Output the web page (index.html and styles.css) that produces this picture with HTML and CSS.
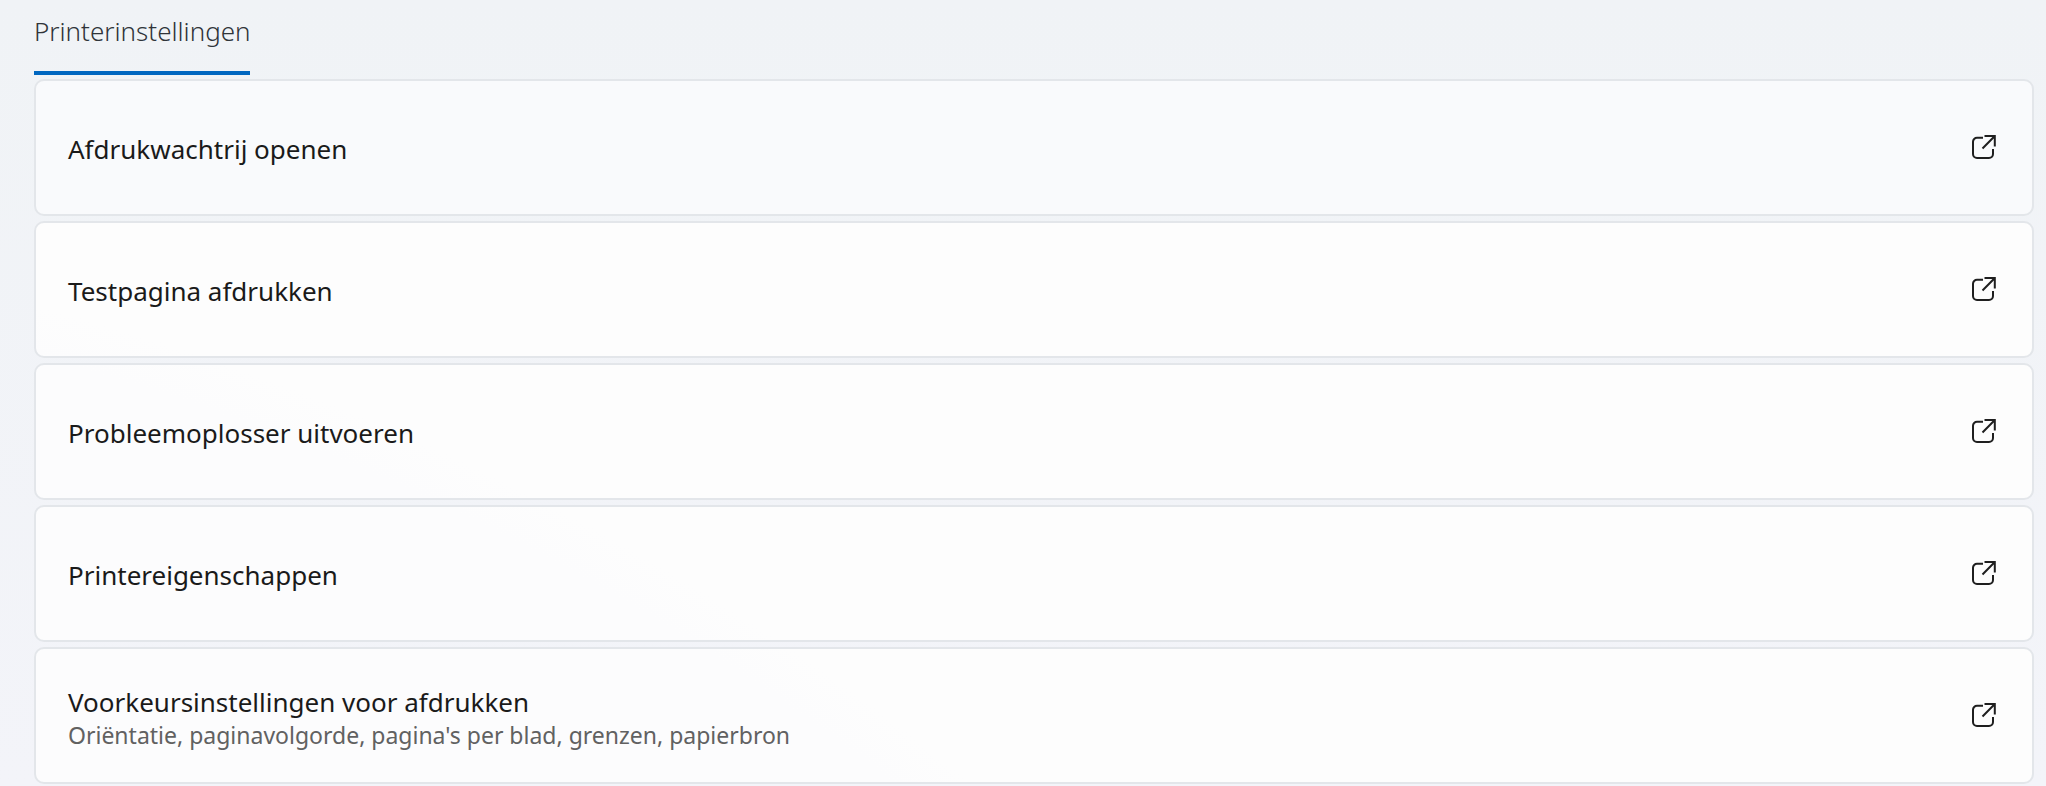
FILE: index.html
```html
<!DOCTYPE html>
<html lang="en">

<head>
    <meta charset="UTF-8">
    <meta name="viewport" content="width=device-width, initial-scale=1.0">
    <title>Printerinstellingen</title>
    <link rel="stylesheet" href="styles.css">
</head>

<body>
    <svg class="icon-defs" width="0" height="0">
        <symbol id="icon-open" viewBox="0 0 25 25">
            <path d="M11 2.800H5A4 4 0 0 0 1 6.800V19A4 4 0 0 0 5 23H17A4 4 0 0 0 21 19V14" />
            <path d="M12.500 1H22.800V11.500M22.800 1L10.500 13.500" />
        </symbol>
    </svg>

    <div class="tabs">
        <div class="tab">Printerinstellingen</div>
    </div>

    <div class="list">
        <div class="card first">
            <div class="card-text">
                <div class="card-title">Afdrukwachtrij openen</div>
            </div>
            <svg class="icon"><use href="#icon-open"></use></svg>
        </div>
        <div class="card">
            <div class="card-text">
                <div class="card-title">Testpagina afdrukken</div>
            </div>
            <svg class="icon"><use href="#icon-open"></use></svg>
        </div>
        <div class="card">
            <div class="card-text">
                <div class="card-title">Probleemoplosser uitvoeren</div>
            </div>
            <svg class="icon"><use href="#icon-open"></use></svg>
        </div>
        <div class="card">
            <div class="card-text">
                <div class="card-title">Printereigenschappen</div>
            </div>
            <svg class="icon"><use href="#icon-open"></use></svg>
        </div>
        <div class="card">
            <div class="card-text">
                <div class="card-title">Voorkeursinstellingen voor afdrukken</div>
                <div class="card-sub">Oriëntatie, paginavolgorde, pagina's per blad, grenzen, papierbron</div>
            </div>
            <svg class="icon"><use href="#icon-open"></use></svg>
        </div>
    </div>
</body>

</html>
```

FILE: styles.css
```css
html,
body {
    height: 100%;
}

body {
    margin: 0;
    padding: 0 12px 0 34px;
    overflow: hidden;
    font-family: "Noto Sans", "Open Sans", sans-serif;
    color: #1a1a1a;
    background: linear-gradient(#f0f3f6, #f3f4f9);
    box-sizing: border-box;
}

.icon-defs {
    display: block;
    height: 0;
}

.tabs {
    display: flex;
    height: 75px;
}

.tab {
    width: 216px;
    height: 71px;
    border-bottom: 4px solid #0067c0;
    font-size: 26px;
    font-weight: 300;
    line-height: 62px;
    color: #2f3439;
    white-space: nowrap;
}

.list {
    display: flex;
    flex-direction: column;
    gap: 5px;
    margin-top: 4px;
}

.card {
    display: flex;
    align-items: center;
    justify-content: space-between;
    height: 137px;
    padding: 0 35px 0 32px;
    box-sizing: border-box;
    background: radial-gradient(circle 2453px at -585px 2679px, #fcfcfd 98%, #fdfdfd 100%) fixed;
    border: 2px solid #e3e6ea;
    border-radius: 10px;
}

.card.first {
    background: #f9fafc;
}

.card-text {
    padding-top: 3px;
}

.card-title {
    font-size: 26px;
    line-height: 36px;
    color: #1a1a1a;
}

.card-sub {
    font-size: 23px;
    line-height: 30px;
    color: #616161;
}

.icon {
    width: 25px;
    height: 25px;
    fill: none;
    stroke: #1f1f1f;
    stroke-width: 2;
}
```
